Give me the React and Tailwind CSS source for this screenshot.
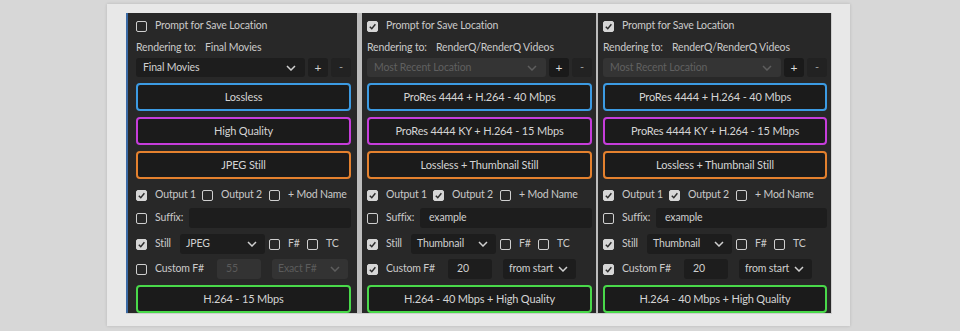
import React from "react";

const FONT = { fontFamily: "Lato, 'Noto Sans', sans-serif" };

const Check = ({ on }) => (
  <div
    className={
      "w-[11px] h-[11px] shrink-0 rounded-[2px] border-[1.5px] flex items-center justify-center " +
      (on ? "bg-[#d6d6d6] border-[#d6d6d6]" : "border-[#cfcfcf] bg-transparent")
    }
  >
    {on && (
      <svg width="9" height="9" viewBox="0 0 10 10">
        <polyline points="2,5.2 4.2,7.5 8.2,2.5" fill="none" stroke="#2a2a2a" strokeWidth="1.6" />
      </svg>
    )}
  </div>
);

const Chevron = ({ dim }) => (
  <svg width="10" height="6" viewBox="0 0 10 6" className="shrink-0">
    <polyline points="1,1 5,5 9,1" fill="none" stroke={dim ? "#5e5e5e" : "#d0d0d0"} strokeWidth="1.5" />
  </svg>
);

const borders = {
  blue: "border-[#3c9be3]",
  magenta: "border-[#c63ddb]",
  orange: "border-[#e4812e]",
  green: "border-[#49d94a]",
};

const BigButton = ({ label, color, className = "" }) => (
  <div
    className={
      "h-[28px] shrink-0 rounded-[4px] border-2 bg-[#1b1b1b] flex items-center justify-center text-[11px] text-[#d4d4d4] " +
      borders[color] +
      " " +
      className
    }
  >
    {label}
  </div>
);

const Select = ({ label, w, dim, className = "" }) => (
  <div
    className={
      "h-[20px] shrink-0 rounded-[3px] flex items-center justify-between pl-[6px] pr-[8px] " +
      (dim ? "bg-[#333333] text-[#5c5c5c]" : "bg-[#1d1d1d] text-[#cfcfcf]") +
      " " +
      w +
      " " +
      className
    }
  >
    <span>{label}</span>
    <Chevron dim={dim} />
  </div>
);

const Label = ({ on, text, w }) => (
  <div className={"flex items-center gap-[8px] shrink-0 " + w}>
    <Check on={on} />
    <span>{text}</span>
  </div>
);

const Panel = ({ p }) => (
  <div
    className={
      "h-[300px] shrink-0 bg-[#282828] flex flex-col whitespace-nowrap text-[10.5px] tracking-[-0.15px] text-[#cacaca] " +
      p.box
    }
    style={FONT}
  >
    <div className="h-[20px] mt-[3px] flex items-center gap-[8px]">
      <Check on={p.prompt} />
      <span>Prompt for Save Location</span>
    </div>
    <div className="h-[20px] mt-[2px] flex items-center">
      <span className="w-[69px] shrink-0">Rendering to:</span>
      <span>{p.dest}</span>
    </div>
    <div className="h-[19px] flex gap-[3px]">
      <div
        className={
          "flex-1 rounded-[3px] flex items-center justify-between pl-[7px] pr-[9px] " +
          (p.dropDim ? "bg-[#343434] text-[#606060]" : "bg-[#1d1d1d] text-[#d0d0d0]")
        }
      >
        <span>{p.drop}</span>
        <Chevron dim={p.dropDim} />
      </div>
      <div
        className={
          "w-[20px] rounded-[3px] flex items-center justify-center text-[12px] " +
          (p.dropDim ? "bg-[#1a1a1a] text-[#dddddd]" : "bg-[#1e1e1e] text-[#cfcfcf]")
        }
      >
        +
      </div>
      <div className="w-[20px] rounded-[3px] bg-[#222222] flex items-center justify-center text-[11px] text-[#a0a0a0]">
        -
      </div>
    </div>
    <BigButton label={p.b1} color="blue" className="mt-[6px]" />
    <BigButton label={p.b2} color="magenta" className="mt-[6px]" />
    <BigButton label={p.b3} color="orange" className="mt-[6px]" />
    <div className="h-[20px] mt-[6px] flex items-center">
      <Label on={p.o1} text="Output 1" w="w-[66px]" />
      <Label on={p.o2} text="Output 2" w="w-[67px]" />
      <Label on={false} text="+ Mod Name" w="" />
    </div>
    <div className="h-[20px] mt-[3px] flex items-center">
      <Label on={false} text="Suffix:" w="w-[53px]" />
      <div className="flex-1 h-[20px] rounded-[3px] bg-[#1d1d1d] flex items-center pl-[9px] text-[#cfcfcf]">
        {p.suffix}
      </div>
    </div>
    <div className="h-[20px] mt-[6px] flex items-center">
      <Label on={true} text="Still" w="w-[44px]" />
      <Select label={p.still} w="w-[85px]" />
      <Label on={false} text="F#" w="w-[38px] ml-[4px]" />
      <Label on={false} text="TC" w="" />
    </div>
    <div className="h-[20px] mt-[5px] flex items-center">
      <Label on={p.custom} text="Custom F#" w="w-[81px]" />
      <div
        className={
          "w-[44px] h-[20px] shrink-0 rounded-[3px] flex items-center pl-[9px] " +
          (p.custom ? "bg-[#1d1d1d] text-[#cfcfcf]" : "bg-[#333333] text-[#5a5a5a]")
        }
      >
        {p.num}
      </div>
      <Select label={p.mode} w={p.custom ? "w-[73px]" : "w-[76px]"} dim={!p.custom} className="ml-[11px]" />
    </div>
    <BigButton label={p.bottom} color="green" className="mt-[6px] h-[27px]" />
  </div>
);

const panels = [
  {
    box: "w-[231px] pl-[8px] pr-[6px] border-l-2 border-[#3a6aa5]",
    prompt: false,
    dest: "Final Movies",
    drop: "Final Movies",
    dropDim: false,
    b1: "Lossless",
    b2: "High Quality",
    b3: "JPEG Still",
    o1: true,
    o2: false,
    suffix: "",
    still: "JPEG",
    custom: false,
    num: "55",
    mode: "Exact F#",
    bottom: "H.264 -  15 Mbps",
  },
  {
    box: "w-[234px] pl-[5px] pr-[4px] ml-[5px]",
    prompt: true,
    dest: "RenderQ/RenderQ Videos",
    drop: "Most Recent Location",
    dropDim: true,
    b1: "ProRes 4444 + H.264 - 40 Mbps",
    b2: "ProRes 4444 KY + H.264 -  15 Mbps",
    b3: "Lossless + Thumbnail Still",
    o1: true,
    o2: true,
    suffix: "example",
    still: "Thumbnail",
    custom: true,
    num: "20",
    mode: "from start",
    bottom: "H.264 - 40 Mbps + High Quality",
  },
  {
    box: "w-[234px] pl-[5px] pr-[4px] ml-[2px] border-r border-[#cfcfcf]",
    prompt: true,
    dest: "RenderQ/RenderQ Videos",
    drop: "Most Recent Location",
    dropDim: true,
    b1: "ProRes 4444 + H.264 - 40 Mbps",
    b2: "ProRes 4444 KY + H.264 -  15 Mbps",
    b3: "Lossless + Thumbnail Still",
    o1: true,
    o2: true,
    suffix: "example",
    still: "Thumbnail",
    custom: true,
    num: "20",
    mode: "from start",
    bottom: "H.264 - 40 Mbps + High Quality",
  },
];

export default function App() {
  return (
    <div className="w-[960px] h-[331px] bg-[#d7d7d7] pt-[4px] overflow-hidden">
      <div className="ml-[107px] w-[743px] h-[322px] bg-[#e8e8e8] shadow-[0_0_3px_rgba(0,0,0,0.15)] pl-[19px] pt-[9px]">
        <div className="flex items-start bg-[#bdbdbd] w-[706px] border-b border-[#cfcfcf]">
          {panels.map((p, i) => (
            <Panel key={i} p={p} />
          ))}
        </div>
      </div>
    </div>
  );
}
